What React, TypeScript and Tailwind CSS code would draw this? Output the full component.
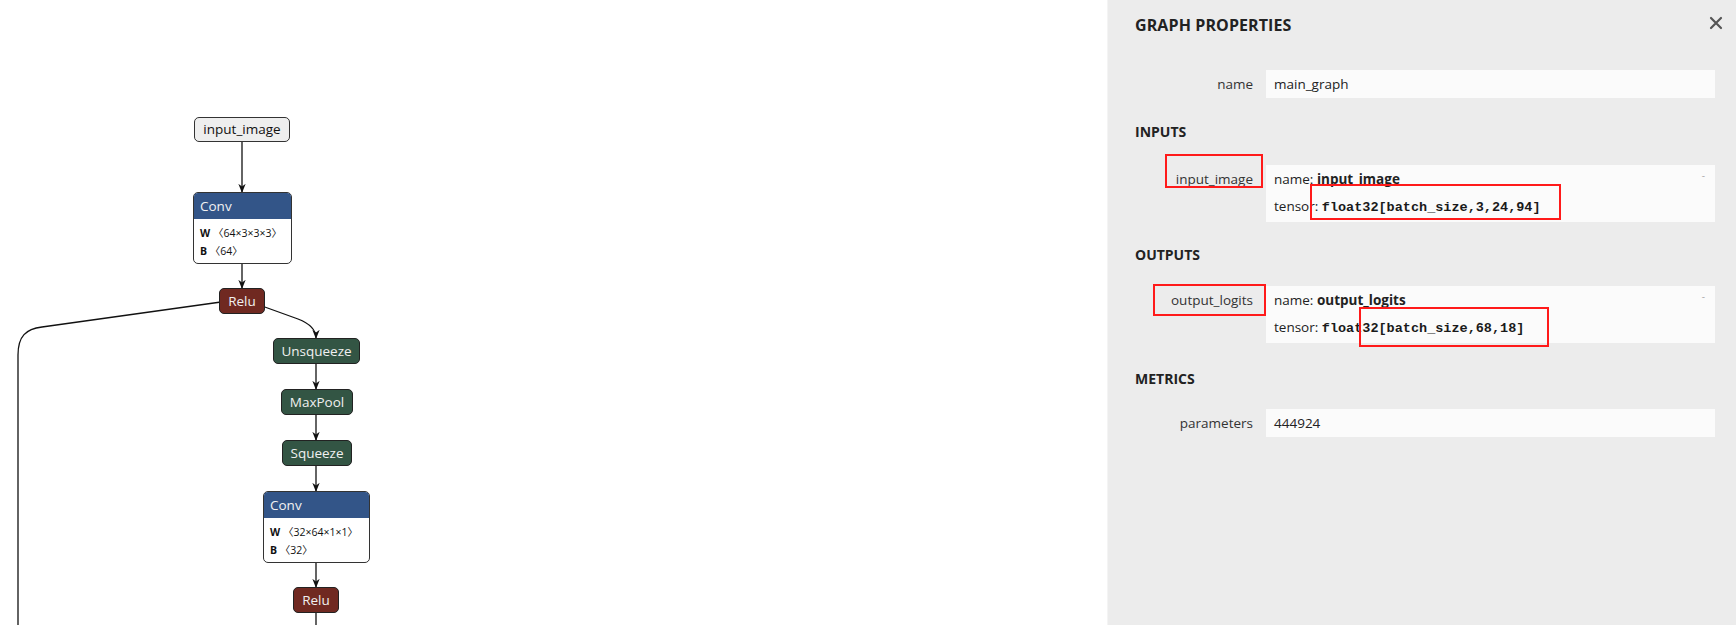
import React from 'react';

const SANS = { fontFamily: '"Open Sans", "Noto Sans", sans-serif' };
const MONO = { fontFamily: '"Liberation Mono", "DejaVu Sans Mono", monospace' };
const BRACKET = { fontFamily: '"Open Sans", "Noto Sans CJK SC", sans-serif' };

type OpNode = { label: string; x: number; y: number; w: number; color: string };

const OPS: OpNode[] = [
  { label: 'Relu', x: 219, y: 288, w: 46, color: 'bg-[#702921]' },
  { label: 'Unsqueeze', x: 273, y: 338, w: 87, color: 'bg-[#335544]' },
  { label: 'MaxPool', x: 281, y: 389, w: 72, color: 'bg-[#335544]' },
  { label: 'Squeeze', x: 282, y: 440, w: 70, color: 'bg-[#335544]' },
  { label: 'Relu', x: 293, y: 587, w: 46, color: 'bg-[#702921]' },
];

const ConvNode: React.FC<{ x: number; y: number; w: number; weight: string; bias: string }> = ({ x, y, w, weight, bias }) => (
  <div
    className="absolute rounded-[5px] border border-[#333] bg-white overflow-hidden"
    style={{ left: x, top: y, width: w }}
  >
    <div className="h-[26px] bg-[#335588] px-[6px] text-[13.5px] leading-[26px] text-[#f2f2f2]">Conv</div>
    <div className="pt-[5px] pb-[3px] px-[6px] text-[10.5px] leading-[18px] text-[#111]">
      <div className="whitespace-nowrap"><b>W</b> <span style={BRACKET}>〈</span>{weight}<span style={BRACKET}>〉</span></div>
      <div className="whitespace-nowrap"><b>B</b> <span style={BRACKET}>〈</span>{bias}<span style={BRACKET}>〉</span></div>
    </div>
  </div>
);

const Graph: React.FC = () => (
  <div className="relative flex-1 bg-white overflow-hidden" style={SANS}>
    <svg className="absolute left-0 top-0" width="1107" height="625">
      <defs>
        <marker id="arrow" viewBox="0 0 10 10" refX="9" refY="5" markerWidth="7" markerHeight="7" orient="auto">
          <path d="M0 1 L10 5 L0 9 L3 5 Z" fill="#111" />
        </marker>
      </defs>
      <g fill="none" stroke="#111" strokeWidth="1.3">
        <path d="M242 142 L242 192" markerEnd="url(#arrow)" />
        <path d="M242 263 L242 288" markerEnd="url(#arrow)" />
        <path d="M221 302 L42 327 C26 329 18 336 18 355 L18 625" />
        <path d="M262 306 L298 319 C311 324 316 330 316 338" markerEnd="url(#arrow)" />
        <path d="M316 364 L316 389" markerEnd="url(#arrow)" />
        <path d="M316 415 L316 440" markerEnd="url(#arrow)" />
        <path d="M316 466 L316 491" markerEnd="url(#arrow)" />
        <path d="M316 562 L316 587" markerEnd="url(#arrow)" />
        <path d="M316 612 L316 625" />
      </g>
    </svg>

    <div className="absolute left-[194px] top-[117px] w-[96px] h-[25px] rounded-[5px] border border-[#333] bg-[#eeeeee] text-center text-[13.5px] leading-[23px] text-[#111]">
      input_image
    </div>

    <ConvNode x={193} y={192} w={99} weight="64×3×3×3" bias="64" />
    <ConvNode x={263} y={491} w={107} weight="32×64×1×1" bias="32" />

    {OPS.map((op, i) => (
      <div
        key={i}
        className={`absolute h-[26px] rounded-[5px] border border-[#222] text-center text-[13.5px] leading-[24px] text-[#f0f0f0] ${op.color}`}
        style={{ left: op.x, top: op.y, width: op.w }}
      >
        {op.label}
      </div>
    ))}
  </div>
);

const Row: React.FC<{ label: string; children: React.ReactNode; className?: string }> = ({ label, children, className }) => (
  <div className={`flex gap-[13px] ${className ?? ''}`}>
    <div className="w-[118px] shrink-0 text-right text-[13.5px] leading-[28px] text-[#333]">{label}</div>
    <div className="flex-1 bg-[#fbfbfb] pl-[8px] text-[13.5px] text-[#222]">{children}</div>
  </div>
);

const Section: React.FC<{ title: string; className: string }> = ({ title, className }) => (
  <div className={`text-[14px] font-bold leading-[20px] text-[#222] ${className}`}>{title}</div>
);

const TensorValue: React.FC<{ name: string; type: string }> = ({ name, type }) => (
  <div className="flex justify-between py-[1px] pr-[10px] leading-[27px]">
    <div>
      <div>name: <b>{name}</b></div>
      <div>tensor: <b className="text-[13.5px] text-[#1a1a1a]" style={MONO}>{type}</b></div>
    </div>
    <span className="text-[10px] leading-[18px] text-[#aaa]">-</span>
  </div>
);

const Sidebar: React.FC = () => (
  <div className="relative w-[629px] shrink-0 border-l border-[#f4f4f4] bg-[#ececec] pl-[27px] pr-[21px]" style={SANS}>
    <div className="mt-[15px] flex items-center justify-between">
      <div className="text-[16px] font-bold leading-[20px] tracking-[0.1px] text-[#222]">GRAPH PROPERTIES</div>
      <svg width="14" height="14" viewBox="0 0 14 14" className="-mr-[8px] -mt-[4px]">
        <path d="M2 2 L12 12 M12 2 L2 12" stroke="#555" strokeWidth="2.2" strokeLinecap="round" />
      </svg>
    </div>

    <Row label="name" className="mt-[35px]">
      <div className="leading-[28px]">main_graph</div>
    </Row>

    <Section title="INPUTS" className="mt-[24px]" />
    <Row label="input_image" className="mt-[23px]">
      <TensorValue name="input_image" type="float32[batch_size,3,24,94]" />
    </Row>

    <Section title="OUTPUTS" className="mt-[23px]" />
    <Row label="output_logits" className="mt-[21px]">
      <TensorValue name="output_logits" type="float32[batch_size,68,18]" />
    </Row>

    <Section title="METRICS" className="mt-[26px]" />
    <Row label="parameters" className="mt-[20px]">
      <div className="leading-[28px]">444924</div>
    </Row>

    {/* annotation boxes drawn over the panel */}
    <div className="absolute left-[57px] top-[154px] h-[34px] w-[98px] border-2 border-[#ff1a1a]" />
    <div className="absolute left-[202px] top-[184px] h-[36px] w-[251px] border-2 border-[#ff1a1a]" />
    <div className="absolute left-[45px] top-[284px] h-[32px] w-[113px] border-2 border-[#ff1a1a]" />
    <div className="absolute left-[251px] top-[307px] h-[40px] w-[190px] border-2 border-[#ff1a1a]" />
  </div>
);

export default function App() {
  return (
    <div className="flex h-[625px] w-[1736px] overflow-hidden">
      <Graph />
      <Sidebar />
    </div>
  );
}
